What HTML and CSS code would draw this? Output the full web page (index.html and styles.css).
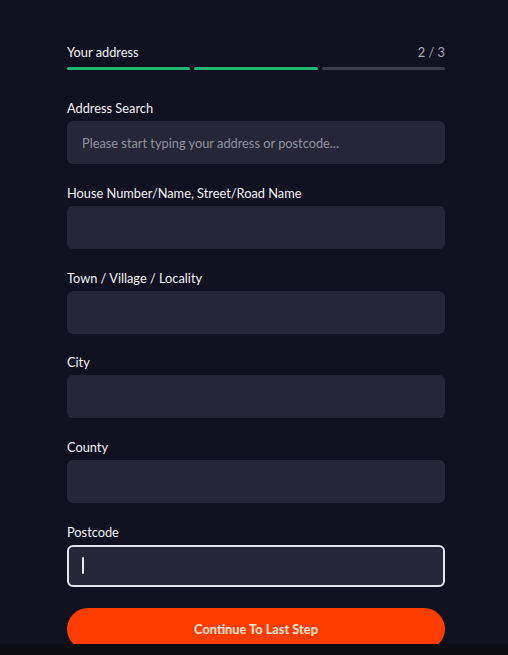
FILE: index.html
```html
<!DOCTYPE html>
<html lang="en">
<head>
<meta charset="utf-8">
<title>Your address</title>
<link rel="stylesheet" href="styles.css">
</head>
<body>
<main class="form">
  <div class="progress-head">
    <span class="step-title">Your address</span>
    <span class="step-count">2 / 3</span>
  </div>
  <div class="progress-bars">
    <span class="bar done"></span>
    <span class="bar done"></span>
    <span class="bar"></span>
  </div>

  <div class="fields">
    <label class="field">
      <span class="label">Address Search</span>
      <input class="input" type="text" placeholder="Please start typing your address or postcode...">
    </label>
    <label class="field">
      <span class="label">House Number/Name, Street/Road Name</span>
      <input class="input" type="text">
    </label>
    <label class="field">
      <span class="label">Town / Village / Locality</span>
      <input class="input" type="text">
    </label>
    <label class="field">
      <span class="label">City</span>
      <input class="input" type="text">
    </label>
    <label class="field">
      <span class="label">County</span>
      <input class="input" type="text">
    </label>
    <label class="field">
      <span class="label">Postcode</span>
      <span class="input focused"><span class="caret"></span></span>
    </label>
  </div>

  <button class="continue" type="button">Continue To Last Step</button>
</main>
<div class="bottom-strip"></div>
</body>
</html>
```

FILE: styles.css
```css
* { box-sizing: border-box; }

html, body {
  margin: 0;
  padding: 0;
  background: #11101f;
  height: 100%;
  overflow: hidden;
}

body {
  font-family: Lato, "Open Sans", "Liberation Sans", sans-serif;
  color: #efeff4;
}

.form {
  width: 378px;
  margin-left: 67px;
  padding-top: 44px;
}

.progress-head {
  display: flex;
  justify-content: space-between;
  font-size: 12.8px;
  line-height: 16px;
}

.step-title { color: #f0f0f5; }
.step-count { color: #a8a8b6; }

.progress-bars {
  display: flex;
  gap: 4px;
  margin-top: 7px;
}

.bar {
  flex: 1;
  height: 3px;
  border-radius: 2px;
  background: #3b3b4c;
}

.bar.done { background: #20b872; }

.fields {
  display: flex;
  flex-direction: column;
  gap: 20.8px;
  margin-top: 30px;
}

.field {
  display: flex;
  flex-direction: column;
  gap: 5px;
}

.label {
  font-size: 12.8px;
  line-height: 16px;
  color: #f2f2f6;
}

.input {
  display: flex;
  align-items: center;
  height: 43px;
  width: 100%;
  border: 0;
  border-radius: 6px;
  background: #262636;
  padding: 0 15px;
  font-family: inherit;
  font-size: 12.8px;
  color: #efeff4;
  outline: none;
}

.input::placeholder { color: #92929f; }

.focused {
  height: 42px;
  border: 2px solid #e4e4ea;
  padding: 0 13px;
}

.caret {
  width: 2px;
  height: 17px;
  background: #e8e8ee;
  border-radius: 1px;
}

.continue {
  display: block;
  width: 100%;
  height: 42px;
  margin-top: 21px;
  border: 0;
  border-radius: 21px;
  background: #fe3e00;
  color: #fbe6de;
  font-family: inherit;
  font-weight: 700;
  font-size: 12.8px;
}

.bottom-strip {
  position: fixed;
  left: 0;
  right: 0;
  bottom: 0;
  height: 11px;
  background: #0c0c11;
}
```
